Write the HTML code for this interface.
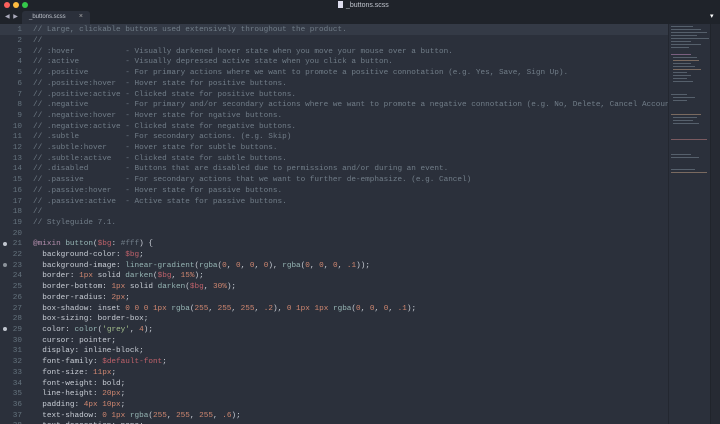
<!DOCTYPE html>
<html><head><meta charset="utf-8"><style>
*{margin:0;padding:0;box-sizing:border-box}
html,body{width:720px;height:424px;overflow:hidden}
body{background:#2b303b;font-family:"Liberation Mono",monospace;position:relative}
.title{position:absolute;left:0;top:0;width:720px;height:24px;background:#1f232a}
.dot{position:absolute;top:2px;width:6px;height:6px;border-radius:50%}
.ttl{position:absolute;left:338px;top:1px;font:7px "Liberation Sans",sans-serif;color:#c0c5ce}
.ttl i{display:inline-block;width:5px;height:7px;background:#dde;vertical-align:-1px;margin-right:3px}
.tab{position:absolute;left:22px;top:11px;width:68px;height:13px;background:#2b303b;border-radius:3px 3px 0 0;font:6px "Liberation Sans",sans-serif;color:#c0c5ce;padding:3px 0 0 7px}
.tab b{position:absolute;right:7px;top:2px;font-weight:normal;font-size:7px;color:#aaa}
.nav{position:absolute;left:5px;top:13px;font-size:6px;color:#aab}
.hl{position:absolute;left:0;top:24px;width:668px;height:11px;background:#343a46}
.code{position:absolute;left:0;top:25.3px;font-size:7.7px;line-height:10.7px;white-space:pre;color:#c8cdd5}
.ln{display:inline-block;width:22px;text-align:right;color:#65737e;margin-right:11px}
.c{color:#717d88}.v{color:#bf616a}.n{color:#d08770}.f{color:#96b5b4}.k{color:#b48ead}.s{color:#a3be8c}
.g{position:absolute;left:3px;width:4px;height:4px;border-radius:50%;background:#c0c5ce}
.mm{position:absolute;left:668px;top:24px;width:42px;height:400px;background:#2b303b;border-left:1px solid #232730}
.mm div{position:absolute;height:1px;background:#56606c}
.sb{position:absolute;left:710px;top:24px;width:10px;height:400px;background:#262a33;border-left:1px solid #20242b}
</style></head><body>
<div class="title">
<div class="dot" style="left:4px;background:#fc605c"></div>
<div class="dot" style="left:13px;background:#fdbc40"></div>
<div class="dot" style="left:22px;background:#34c84a"></div>
<div class="ttl"><i></i>_buttons.scss</div>
<div class="nav">◀ ▶</div>
<div class="tab">_buttons.scss<b>×</b></div>
<div style="position:absolute;left:710px;top:12px;font-size:7px;color:#fff">▾</div>
</div>
<div class="hl"></div>
<div class="g" style="top:242px"></div>
<div class="g" style="top:263px;background:#8a9199"></div>
<div class="g" style="top:327px"></div>
<div class="code"><span class="ln">1</span><span class="c">// Large, clickable buttons used extensively throughout the product.</span>
<span class="ln">2</span><span class="c">//</span>
<span class="ln">3</span><span class="c">// :hover           - Visually darkened hover state when you move your mouse over a button.</span>
<span class="ln">4</span><span class="c">// :active          - Visually depressed active state when you click a button.</span>
<span class="ln">5</span><span class="c">// .positive        - For primary actions where we want to promote a positive connotation (e.g. Yes, Save, Sign Up).</span>
<span class="ln">6</span><span class="c">// .positive:hover  - Hover state for positive buttons.</span>
<span class="ln">7</span><span class="c">// .positive:active - Clicked state for positive buttons.</span>
<span class="ln">8</span><span class="c">// .negative        - For primary and/or secondary actions where we want to promote a negative connotation (e.g. No, Delete, Cancel Account).</span>
<span class="ln">9</span><span class="c">// .negative:hover  - Hover state for ngative buttons.</span>
<span class="ln">10</span><span class="c">// .negative:active - Clicked state for negative buttons.</span>
<span class="ln">11</span><span class="c">// .subtle          - For secondary actions. (e.g. Skip)</span>
<span class="ln">12</span><span class="c">// .subtle:hover    - Hover state for subtle buttons.</span>
<span class="ln">13</span><span class="c">// .subtle:active   - Clicked state for subtle buttons.</span>
<span class="ln">14</span><span class="c">// .disabled        - Buttons that are disabled due to permissions and/or during an event.</span>
<span class="ln">15</span><span class="c">// .passive         - For secondary actions that we want to further de-emphasize. (e.g. Cancel)</span>
<span class="ln">16</span><span class="c">// .passive:hover   - Hover state for passive buttons.</span>
<span class="ln">17</span><span class="c">// .passive:active  - Active state for passive buttons.</span>
<span class="ln">18</span><span class="c">//</span>
<span class="ln">19</span><span class="c">// Styleguide 7.1.</span>
<span class="ln">20</span>
<span class="ln">21</span><span class="k">@mixin</span> <span class="f">button</span>(<span class="v">$bg</span>: <span class="c">#fff</span>) {
<span class="ln">22</span>  background-color: <span class="v">$bg</span>;
<span class="ln">23</span>  background-image: <span class="f">linear-gradient</span>(<span class="f">rgba</span>(<span class="n">0</span>, <span class="n">0</span>, <span class="n">0</span>, <span class="n">0</span>), <span class="f">rgba</span>(<span class="n">0</span>, <span class="n">0</span>, <span class="n">0</span>, <span class="n">.1</span>));
<span class="ln">24</span>  border: <span class="n">1px</span> solid <span class="f">darken</span>(<span class="v">$bg</span>, <span class="n">15%</span>);
<span class="ln">25</span>  border-bottom: <span class="n">1px</span> solid <span class="f">darken</span>(<span class="v">$bg</span>, <span class="n">30%</span>);
<span class="ln">26</span>  border-radius: <span class="n">2px</span>;
<span class="ln">27</span>  box-shadow: inset <span class="n">0 0 0 1px</span> <span class="f">rgba</span>(<span class="n">255</span>, <span class="n">255</span>, <span class="n">255</span>, <span class="n">.2</span>), <span class="n">0 1px 1px</span> <span class="f">rgba</span>(<span class="n">0</span>, <span class="n">0</span>, <span class="n">0</span>, <span class="n">.1</span>);
<span class="ln">28</span>  box-sizing: border-box;
<span class="ln">29</span>  color: <span class="f">color</span>(<span class="s">'grey'</span>, <span class="n">4</span>);
<span class="ln">30</span>  cursor: pointer;
<span class="ln">31</span>  display: inline-block;
<span class="ln">32</span>  font-family: <span class="v">$default-font</span>;
<span class="ln">33</span>  font-size: <span class="n">11px</span>;
<span class="ln">34</span>  font-weight: bold;
<span class="ln">35</span>  line-height: <span class="n">20px</span>;
<span class="ln">36</span>  padding: <span class="n">4px 10px</span>;
<span class="ln">37</span>  text-shadow: <span class="n">0 1px</span> <span class="f">rgba</span>(<span class="n">255</span>, <span class="n">255</span>, <span class="n">255</span>, <span class="n">.6</span>);
<span class="ln">38</span>  text-decoration: none;</div>
<div class="mm">
<div style="left:2px;top:2px;width:22px"></div><div style="left:2px;top:5px;width:30px"></div><div style="left:2px;top:8px;width:36px"></div><div style="left:2px;top:11px;width:26px"></div><div style="left:2px;top:14px;width:38px"></div><div style="left:2px;top:17px;width:20px"></div><div style="left:2px;top:20px;width:30px"></div><div style="left:2px;top:23px;width:18px"></div>
<div style="left:2px;top:30px;width:20px;background:#7a6080"></div><div style="left:4px;top:33px;width:24px"></div><div style="left:4px;top:36px;width:26px;background:#7a6a60"></div><div style="left:4px;top:39px;width:18px"></div><div style="left:4px;top:42px;width:22px"></div><div style="left:4px;top:45px;width:28px;background:#7a6a60"></div><div style="left:4px;top:48px;width:14px"></div><div style="left:4px;top:51px;width:18px"></div><div style="left:4px;top:54px;width:14px"></div><div style="left:4px;top:57px;width:20px"></div>
<div style="left:2px;top:70px;width:16px"></div><div style="left:4px;top:73px;width:22px"></div><div style="left:4px;top:76px;width:14px"></div>
<div style="left:2px;top:90px;width:30px;background:#7a6a60"></div><div style="left:4px;top:93px;width:24px"></div><div style="left:4px;top:96px;width:20px"></div><div style="left:4px;top:99px;width:26px"></div>
<div style="left:2px;top:115px;width:36px;background:#7a5a60"></div><div style="left:2px;top:130px;width:20px"></div><div style="left:2px;top:133px;width:28px"></div><div style="left:2px;top:145px;width:24px"></div><div style="left:2px;top:148px;width:36px;background:#7a6a60"></div>
</div>
<div class="sb"></div>
</body></html>
